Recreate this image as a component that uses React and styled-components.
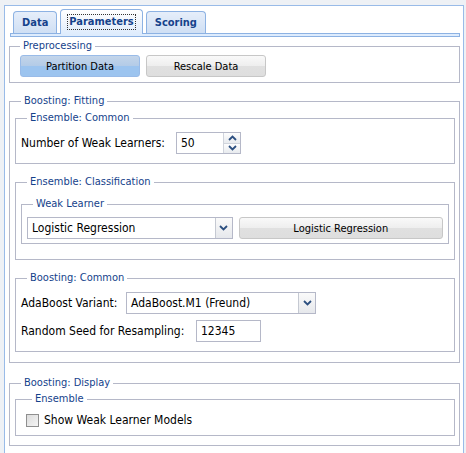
import React from "react";
import styled, { createGlobalStyle } from "styled-components";

const Global = createGlobalStyle`
  html, body { margin: 0; padding: 0; background: #eef1f5; }
  body { font-family: "DejaVu Sans Condensed", "DejaVu Sans", sans-serif; font-size: 11px; color: #000; }
  * { box-sizing: border-box; }
`;

const Page = styled.div`
  padding: 5px 0 0 4px;
  width: 466px;
  height: 453px;
  overflow: hidden;
`;

const Panel = styled.div`
  width: 460px;
  height: 460px;
  background: #fff;
  border: 1px solid #99bbe8;
  padding: 0 3px 0 4px;
`;

const TabStrip = styled.div`
  display: flex;
  flex-direction: column;
  margin: 0 0 0 1px;
`;

const TabRow = styled.div`
  display: flex;
  align-items: flex-end;
  gap: 3px;
  height: 27px;
  padding-left: 3px;
`;

const Tab = styled.div`
  height: ${(p) => (p.$active ? "25px" : "22px")};
  padding: 0 ${(p) => (p.$active ? "7px" : "8px")};
  margin-bottom: ${(p) => (p.$active ? "-1px" : "0")};
  position: relative;
  z-index: ${(p) => (p.$active ? 2 : 1)};
  display: flex;
  align-items: center;
  border: 1px solid #8db2e3;
  border-bottom: none;
  border-radius: 4px 4px 0 0;
  background: ${(p) =>
    p.$active
      ? "linear-gradient(#ffffff, #edf3fc 60%, #deecfd)"
      : "linear-gradient(#e6eefa, #cfdff4)"};
  color: #15428b;
  font-weight: bold;
  font-size: 11px;
  font-family: "DejaVu Sans Condensed", "DejaVu Sans", sans-serif;
`;

const TabText = styled.span`
  outline: ${(p) => (p.$focus ? "1px dotted #333" : "none")};
  padding: 0 1px;
  line-height: 14px;
`;

const Band = styled.div`
  height: 4px;
  border: 1px solid #8db2e3;
  background: #deecfd;
  position: relative;
  z-index: 1;
`;

const Body = styled.div`
  padding: 2px 0 0 0;
`;

const Group = styled.fieldset`
  margin: ${(p) => p.$mt || 0}px 0 0 0;
  padding: ${(p) => p.$pad || "0"};
  border: 1px solid #b5b8c8;
  min-width: 0;
`;

const Legend = styled.legend`
  color: #15428b;
  font-size: 11px;
  line-height: 14px;
  padding: 0 3px;
  margin-left: ${(p) => p.$ml || 5}px;
`;

const ButtonRow = styled.div`
  display: flex;
  gap: 6px;
  padding-left: 10px;
`;

const Button = styled.button`
  width: ${(p) => p.$w || 120}px;
  height: 22px;
  border-radius: 3px;
  font-family: inherit;
  font-size: 11px;
  color: #000;
  padding: 0;
  border: 1px solid ${(p) => (p.$pressed ? "#99bbe8" : "#c7c7c7")};
  background: ${(p) =>
    p.$pressed
      ? "linear-gradient(#c3d5ea, #b3cbe7 50%, #9cc4ef 52%, #9cc4ef)"
      : "linear-gradient(#f9f9f9, #eeeeee 50%, #e0e0e0 52%, #dedede)"};
`;

const Row = styled.div`
  display: flex;
  align-items: center;
  height: ${(p) => p.$h || 24}px;
  margin-top: ${(p) => p.$mt || 0}px;
  padding-left: ${(p) => p.$pl || 0}px;
  gap: ${(p) => p.$gap || 0}px;
`;

const Label = styled.span`
  font-size: 12px;
  width: ${(p) => (p.$w ? p.$w + "px" : "auto")};
  flex: none;
`;

const TextBox = styled.div`
  width: ${(p) => p.$w}px;
  height: ${(p) => p.$h || 22}px;
  border: 1px solid #b5b8c8;
  background: #fff;
  display: flex;
  align-items: center;
  padding-left: 4px;
  font-size: 12px;
`;

const Spinner = styled.div`
  width: 65px;
  height: 22px;
  display: flex;
  border: 1px solid #b5b8c8;
  background: #fff;
`;

const SpinValue = styled.div`
  flex: 1;
  display: flex;
  align-items: center;
  padding-left: 4px;
  font-size: 12px;
`;

const SpinButtons = styled.div`
  width: 17px;
  display: flex;
  flex-direction: column;
  border-left: 1px solid #d0d4dc;
`;

const SpinBtn = styled.div`
  flex: 1;
  display: flex;
  align-items: center;
  justify-content: center;
  background: linear-gradient(#fdfdfd, #e8ebef);
  & + & { border-top: 1px solid #d0d4dc; }
`;

const Combo = styled.div`
  width: ${(p) => p.$w}px;
  height: 22px;
  display: flex;
  border: 1px solid #b5b8c8;
  background: #fff;
`;

const ComboText = styled.div`
  flex: 1;
  display: flex;
  align-items: center;
  padding-left: 4px;
  font-size: 12px;
`;

const ComboTrigger = styled.div`
  width: 17px;
  display: flex;
  align-items: center;
  justify-content: center;
  border-left: 1px solid #c5c9d2;
  background: linear-gradient(#fafafa, #e6e8ec);
`;

const Check = styled.span`
  width: 13px;
  height: 13px;
  border: 1px solid #8f8f8f;
  background: linear-gradient(135deg, #dcdcdc, #f5f5f5);
  margin-right: 5px;
  flex: none;
`;

const Chevron = ({ up }) => (
  <svg width="9" height="6" viewBox="0 0 9 6">
    <path
      d={up ? "M1 5 L4.5 1.5 L8 5" : "M1 1 L4.5 4.5 L8 1"}
      fill="none"
      stroke="#2c4f80"
      strokeWidth="1.8"
    />
  </svg>
);

export default function App() {
  return (
    <>
      <Global />
      <Page>
        <Panel>
          <TabStrip>
            <TabRow>
              <Tab>Data</Tab>
              <Tab $active>
                <TabText $focus>Parameters</TabText>
              </Tab>
              <Tab>Scoring</Tab>
            </TabRow>
            <Band />
          </TabStrip>
          <Body>
            <Group $pad="2px 0 5px 0">
              <Legend $ml={10}>Preprocessing</Legend>
              <ButtonRow>
                <Button $pressed>Partition Data</Button>
                <Button>Rescale Data</Button>
              </ButtonRow>
            </Group>

            <Group $mt={11} $pad="3px 4px 10px 5px">
              <Legend $ml={6}>Boosting: Fitting</Legend>

              <Group $pad="0 0 8px 5px">
                <Legend $ml={6}>Ensemble: Common</Legend>
                <Row $mt={6}>
                  <Label $w={155}>Number of Weak Learners:</Label>
                  <Spinner>
                    <SpinValue>50</SpinValue>
                    <SpinButtons>
                      <SpinBtn>
                        <Chevron up />
                      </SpinBtn>
                      <SpinBtn>
                        <Chevron />
                      </SpinBtn>
                    </SpinButtons>
                  </Spinner>
                </Row>
              </Group>

              <Group $mt={11} $pad="8px 5px 15px 5px">
                <Legend $ml={6}>Ensemble: Classification</Legend>
                <Group $pad="6px 5px 4px 5px">
                  <Legend $ml={6}>Weak Learner</Legend>
                  <Row $h={22} $gap={6}>
                    <Combo $w={206}>
                      <ComboText>Logistic Regression</ComboText>
                      <ComboTrigger>
                        <Chevron />
                      </ComboTrigger>
                    </Combo>
                    <Button $w={205}>Logistic Regression</Button>
                  </Row>
                </Group>
              </Group>

              <Group $mt={11} $pad="0 0 8px 5px">
                <Legend $ml={6}>Boosting: Common</Legend>
                <Row $mt={6}>
                  <Label $w={105}>AdaBoost Variant:</Label>
                  <Combo $w={190}>
                    <ComboText>AdaBoost.M1 (Freund)</ComboText>
                    <ComboTrigger>
                      <Chevron />
                    </ComboTrigger>
                  </Combo>
                </Row>
                <Row $mt={4}>
                  <Label $w={175}>Random Seed for Resampling:</Label>
                  <TextBox $w={65}>12345</TextBox>
                </Row>
              </Group>
            </Group>

            <Group $mt={13} $pad="2px 4px 9px 5px">
              <Legend $ml={6}>Boosting: Display</Legend>
              <Group $pad="0 0 6px 10px">
                <Legend $ml={6}>Ensemble</Legend>
                <Row $h={18} $mt={5}>
                  <Check />
                  <Label>Show Weak Learner Models</Label>
                </Row>
              </Group>
            </Group>
          </Body>
        </Panel>
      </Page>
    </>
  );
}
